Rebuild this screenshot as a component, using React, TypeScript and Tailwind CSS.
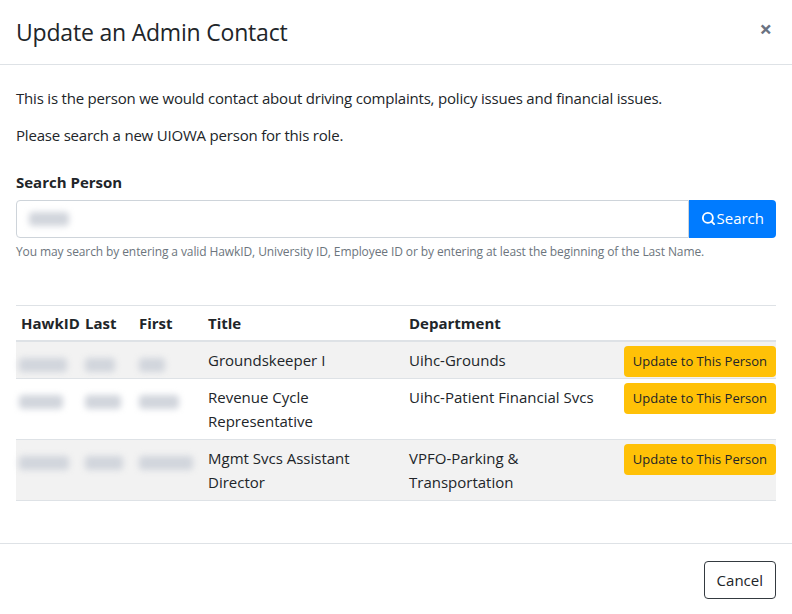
import { Search } from "lucide-react";

const rows = [
  { w: [48, 30, 26], title: ["Groundskeeper I"], dept: ["Uihc-Grounds"] },
  { w: [44, 36, 40], title: ["Revenue Cycle", "Representative"], dept: ["Uihc-Patient Financial Svcs"] },
  { w: [50, 38, 54], title: ["Mgmt Svcs Assistant", "Director"], dept: ["VPFO-Parking &", "Transportation"] },
];

const Blur = ({ w }: { w: number }) => (
  <span className="inline-block h-[14px] rounded bg-gray-300 blur-[3px] align-middle" style={{ width: w }} />
);

export default function App() {
  return (
    <div className="w-[792px] h-[614px] bg-white text-[#212529] text-[15px]" style={{ fontFamily: '"Open Sans", sans-serif' }}>
      <div className="flex items-center justify-between h-[65px] px-4 border-b border-[#dee2e6]">
        <h1 className="text-[23px] leading-none tracking-[-0.2px]">Update an Admin Contact</h1>
        <button className="text-[22px] font-bold text-gray-500 leading-none mr-[4px] -mt-2">×</button>
      </div>
      <div className="px-4 pt-[22px] h-[479px] border-b border-[#dee2e6]">
        <p className="tracking-[-0.2px]">This is the person we would contact about driving complaints, policy issues and financial issues.</p>
        <p className="mt-[14px] tracking-[-0.2px]">Please search a new UIOWA person for this role.</p>
        <label className="block mt-[25px] font-bold">Search Person</label>
        <div className="flex mt-[6px] h-[38px]">
          <div className="flex-1 flex items-center border border-[#ced4da] rounded-l px-3">
            <Blur w={40} />
          </div>
          <button className="flex items-center gap-[1px] px-3 bg-[#007bff] text-white rounded-r">
            <Search size={15} strokeWidth={3} />
            Search
          </button>
        </div>
        <p className="mt-[5px] text-[12px] text-[#6c757d] tracking-[-0.1px]">
          You may search by entering a valid HawkID, University ID, Employee ID or by entering at least the beginning of the Last Name.
        </p>
        <table className="w-full mt-[44px] border-t border-[#dee2e6]">
          <thead>
            <tr className="text-left border-b-2 border-[#dee2e6] h-[36px]">
              <th className="pl-[5px] w-[69px]">HawkID</th>
              <th className="w-[54px]">Last</th>
              <th className="w-[69px]">First</th>
              <th className="w-[201px]">Title</th>
              <th>Department</th>
              <th></th>
            </tr>
          </thead>
          <tbody>
            {rows.map((r, i) => (
              <tr key={i} className={`border-b border-[#dee2e6] ${i % 2 === 0 ? "bg-[#f2f2f2]" : ""}`}>
                {r.w.map((w, j) => (
                  <td key={j} className={`align-top pt-[10px] ${j === 0 ? "pl-[3px]" : ""}`}>
                    <Blur w={w} />
                  </td>
                ))}
                <td className="align-top py-[6px] leading-6">{r.title.map((t) => <div key={t}>{t}</div>)}</td>
                <td className="align-top py-[6px] leading-6">{r.dept.map((t) => <div key={t}>{t}</div>)}</td>
                <td className="align-top pt-[4px] text-right">
                  <button className="bg-[#ffc107] rounded text-[13px] px-[9px] h-[31px] whitespace-nowrap">Update to This Person</button>
                </td>
              </tr>
            ))}
          </tbody>
        </table>
      </div>
      <div className="flex justify-end px-4 pt-[17px]">
        <button className="border border-[#343a40] rounded px-3 h-[38px]">Cancel</button>
      </div>
    </div>
  );
}
